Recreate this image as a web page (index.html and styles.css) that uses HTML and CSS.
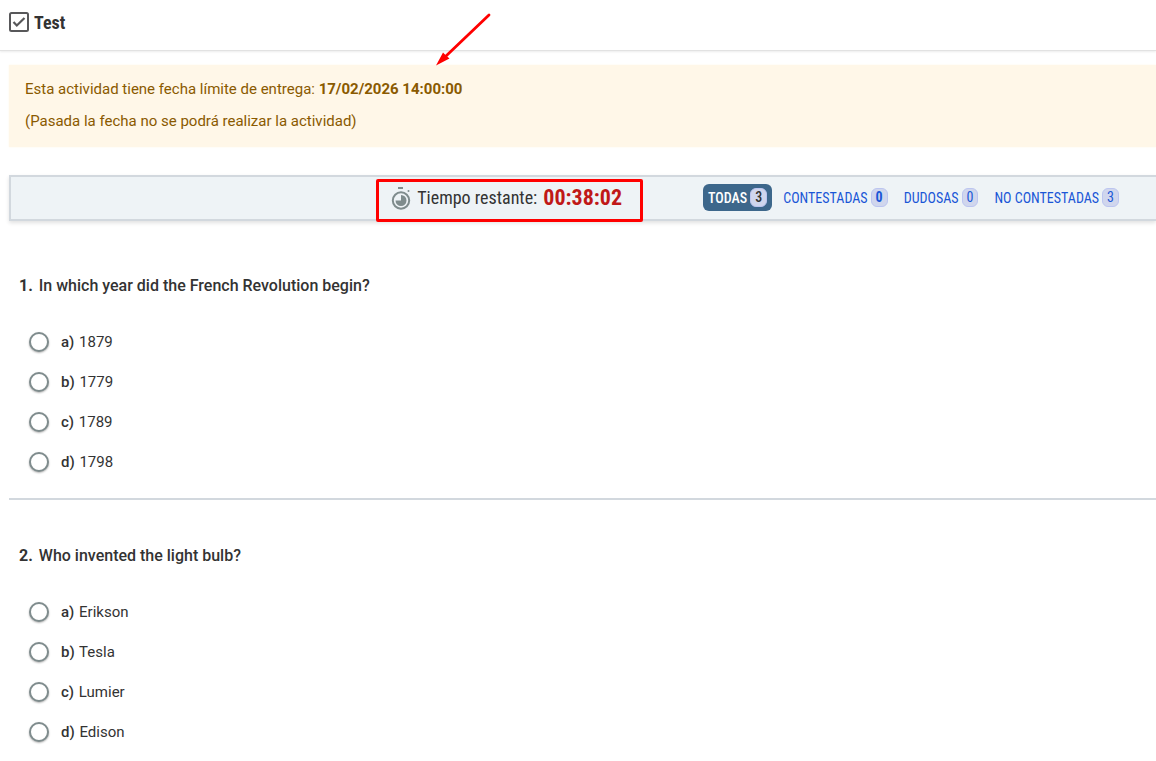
FILE: index.html
```
<!DOCTYPE html>
<html lang="es">
<head>
  <meta charset="UTF-8" />
  <meta name="viewport" content="width=device-width, initial-scale=1.0" />
  <title>Test</title>
  <link rel="stylesheet" href="styles.css">
</head>
<body>
  <header class="header">
    <svg class="header-icon" viewBox="0 0 20 20" aria-hidden="true">
      <rect x="1" y="1" width="18" height="18" rx="1.5" fill="#fff" stroke="#58585a" stroke-width="2" />
      <path d="M4.5 10l3.3 3.5 7.7-7.5" fill="none" stroke="#58585a" stroke-width="2.2" />
    </svg>
    <h1>Test</h1>
  </header>

  <main>
    <div class="notice">
      <p>Esta actividad tiene fecha límite de entrega: <strong>17/02/2026 14:00:00</strong></p>
      <p>(Pasada la fecha no se podrá realizar la actividad)</p>
      <svg class="arrow" viewBox="0 0 56 54" aria-hidden="true">
        <path d="M53 2L10 43" stroke="#f00" stroke-width="2.8" stroke-linecap="round" />
        <path d="M0 52.5L7 39.5L9.5 42L13.5 45.5Z" fill="#f00" />
      </svg>
    </div>

    <div class="toolbar">
      <div class="timer">
        <svg class="timer-icon" viewBox="0 0 20 24" aria-hidden="true">
          <path d="M7 2h5" stroke="#7f8c8d" stroke-width="2" />
          <circle cx="17.5" cy="5" r="1" fill="#7f8c8d" />
          <circle cx="10" cy="14.5" r="8.2" fill="none" stroke="#7f8c8d" stroke-width="2" />
          <path d="M10 9V14.5H4.5A5.5 5.5 0 1 0 10 9Z" fill="#7f8c8d" />
        </svg>
        <span>Tiempo restante:</span>
        <strong>00:38:02</strong>
      </div>
      <nav class="filters">
        <button class="filter active">TODAS <span class="count">3</span></button>
        <button class="filter">CONTESTADAS <span class="count strong">0</span></button>
        <button class="filter">DUDOSAS <span class="count">0</span></button>
        <button class="filter">NO CONTESTADAS <span class="count">3</span></button>
      </nav>
    </div>

    <section class="question">
      <h2><b>1.</b> In which year did the French Revolution begin?</h2>
      <label class="option"><input type="radio" name="q1"><span><b>a)</b> 1879</span></label>
      <label class="option"><input type="radio" name="q1"><span><b>b)</b> 1779</span></label>
      <label class="option"><input type="radio" name="q1"><span><b>c)</b> 1789</span></label>
      <label class="option"><input type="radio" name="q1"><span><b>d)</b> 1798</span></label>
    </section>

    <section class="question">
      <h2><b>2.</b> Who invented the light bulb?</h2>
      <label class="option"><input type="radio" name="q2"><span><b>a)</b> Erikson</span></label>
      <label class="option"><input type="radio" name="q2"><span><b>b)</b> Tesla</span></label>
      <label class="option"><input type="radio" name="q2"><span><b>c)</b> Lumier</span></label>
      <label class="option"><input type="radio" name="q2"><span><b>d)</b> Edison</span></label>
    </section>
  </main>
</body>
</html>
```
FILE: styles.css
```
* { box-sizing: border-box; }
body { font-family: Roboto, sans-serif; font-size: 15px; line-height: 24px; background: white; color: #333; margin: 0; }
h1, h2, p { margin: 0; }

.header { display: flex; align-items: center; gap: 5px; height: 51px; padding: 0 9px 6px; border-bottom: 1px solid #e2e2e2; box-shadow: 0 1px 2px rgba(0, 0, 0, 0.08); }
.header-icon { width: 20px; height: 20px; }
.header h1 { padding-top: 2px; font-family: "Roboto Condensed", Roboto, sans-serif; font-size: 18px; font-weight: 700; }

main { padding: 14px 0 0 9px; }

.notice { position: relative; display: flex; flex-direction: column; gap: 8px; padding: 12px 16px 14px; background: #fff7e8; color: #8a5a00; box-shadow: 0 0 2px #fff7e8; }
.arrow { position: absolute; left: 427px; top: -52px; width: 56px; height: 54px; }

.toolbar { display: flex; justify-content: flex-end; align-items: center; gap: 81px; height: 46px; margin-top: 28px; padding: 0 32px 1px 0; background: #eef3f6; border: 2px solid #d2d8de; border-right: 0; box-shadow: 0 2px 4px rgba(0, 0, 0, 0.12); font-family: "Roboto Condensed", Roboto, sans-serif; }
.timer { position: relative; display: flex; align-items: center; gap: 6px; font-size: 18px; white-space: nowrap; }
.timer::after { content: ""; position: absolute; inset: -7px -21px -12px -15px; border: 3px solid #f00; border-radius: 2px; }
.timer-icon { width: 20px; height: 24px; }
.timer strong { font-size: 22px; font-weight: 700; color: #c01818; }

.filters { display: flex; gap: 6px; }
.filter { display: flex; align-items: center; gap: 3px; height: 27px; padding: 0 5px; border: 0; border-radius: 6px; background: none; color: #1a56d6; font-family: inherit; font-size: 14px; white-space: nowrap; cursor: pointer; }
.filter.active { background: #3d678b; color: white; font-weight: 500; }
.count { padding: 0 4px; border: 1px solid #bcc5f0; border-radius: 6px; background: #d0d6ed; line-height: 17px; }
.count.strong { font-weight: 700; }
.active .count { color: #333; }

.question { padding: 44px 10px 16px; border-bottom: 2px solid #d2d8de; }
.toolbar + .question { margin-top: 9px; }
.question:last-child { border-bottom: 0; padding-bottom: 0; }
.question h2 { margin-bottom: 24px; font-size: 16px; font-weight: 500; }
.question h2 b { margin-right: 2px; font-weight: 700; }
.option { display: flex; align-items: center; gap: 12px; height: 40px; padding-left: 10px; cursor: pointer; }
.option b { margin-right: 1px; font-weight: 500; }
.option input { appearance: none; width: 20px; height: 20px; margin: 0; border: 2px solid #7f8c8d; border-radius: 50%; background: white; box-shadow: 0 1px 2px rgba(0, 0, 0, 0.3); }
.option input:checked { background: radial-gradient(#3d678b 45%, white 50%); }
```
